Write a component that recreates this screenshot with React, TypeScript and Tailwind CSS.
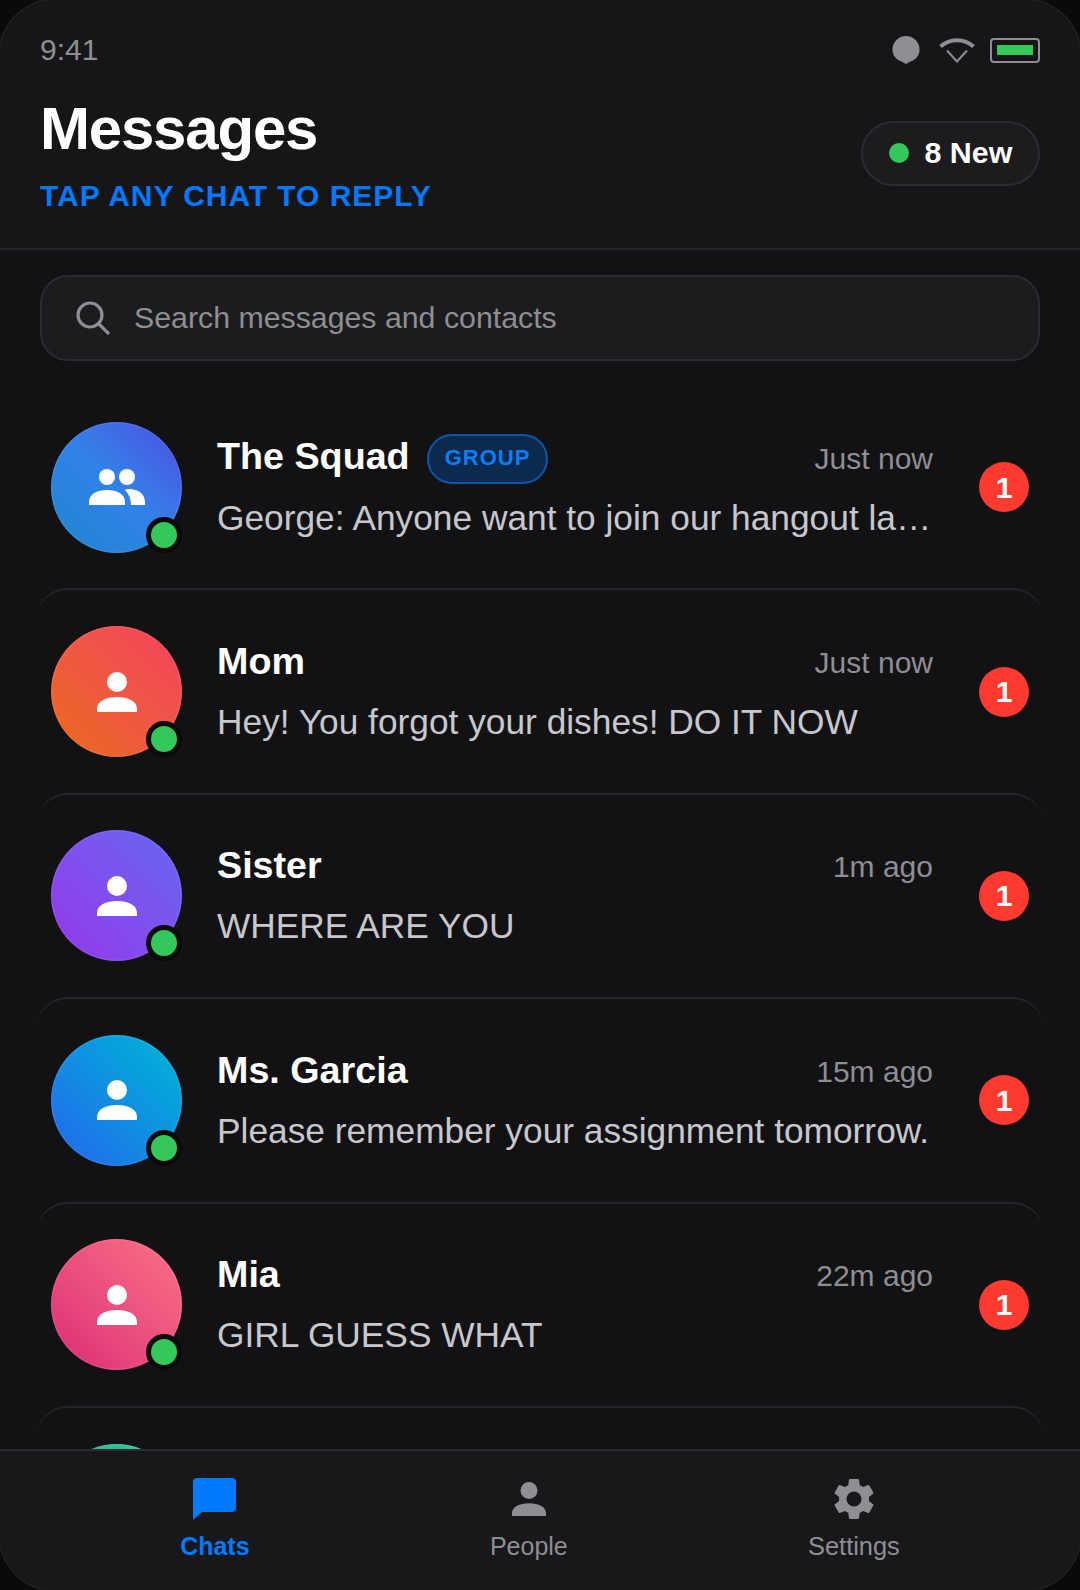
const font = { fontFamily: '"Liberation Sans", Arial, sans-serif' }

type Chat = {
  name: string
  time: string
  preview: string
  gradient: string
  group?: boolean
}

const chats: Chat[] = [
  { name: 'The Squad', time: 'Just now', preview: 'George: Anyone want to join our hangout later tonight at the park?', gradient: 'bg-gradient-to-tr from-[#1e85cc] via-[#3182e8] to-[#4a4ae0]', group: true },
  { name: 'Mom', time: 'Just now', preview: 'Hey! You forgot your dishes! DO IT NOW', gradient: 'bg-gradient-to-tr from-[#ea6a08] to-[#f43f5e]' },
  { name: 'Sister', time: '1m ago', preview: 'WHERE ARE YOU', gradient: 'bg-gradient-to-tr from-[#9333ea] to-[#6366f1]' },
  { name: 'Ms. Garcia', time: '15m ago', preview: 'Please remember your assignment tomorrow.', gradient: 'bg-gradient-to-tr from-[#2563eb] to-[#06b6d4]' },
  { name: 'Mia', time: '22m ago', preview: 'GIRL GUESS WHAT', gradient: 'bg-gradient-to-tr from-[#db2777] to-[#fb7185]' },
  { name: 'Alex', time: '40m ago', preview: 'See you soon', gradient: 'bg-gradient-to-tr from-[#0d9488] to-[#34d399]' },
]

function PersonIcon({ className }: { className?: string }) {
  return (
    <svg viewBox="0 0 40 40" className={className} fill="currentColor">
      <circle cx="20" cy="10" r="10" />
      <path d="M0 40v-3c0-8 9-12 20-12s20 4 20 12v3z" />
    </svg>
  )
}

function GroupIcon() {
  return (
    <svg viewBox="0 0 56 36" className="w-[56px] h-[36px]" fill="currentColor">
      <circle cx="18" cy="8" r="8" />
      <circle cx="38" cy="8" r="8" />
      <path d="M0 36v-3c0-8 8-12 18-12s18 4 18 12v3z" />
      <path d="M36 21c1-.6 3-1 4-1 9 0 16 5 16 13v3H42c0-6-2-11-6-15z" />
    </svg>
  )
}

function Row({ chat, first }: { chat: Chat; first: boolean }) {
  return (
    <div className={`flex items-center shrink-0 mx-[36px] pl-[15px] pr-[15px] rounded-[32px] h-[204.4px] border-t-2 ${first ? 'border-transparent' : 'border-[#26262a]'}`}>
      <div className="relative w-[131px] h-[131px] shrink-0">
        <div className={`w-full h-full rounded-full flex items-center justify-center text-white shadow-[inset_0_0_0_1.5px_rgba(255,255,255,0.08)] ${chat.gradient}`}>
          {chat.group ? <GroupIcon /> : <PersonIcon className="w-[40px] h-[40px]" />}
        </div>
        <div className="absolute right-0 bottom-0 w-[36px] h-[36px] rounded-full bg-[#34c759] border-[5px] border-[#0a0a0c]" />
      </div>
      <div className="flex-1 min-w-0 ml-[35px] mr-[46px] mb-[3px]">
        <div className="flex items-center justify-between h-[50px]">
          <div className="flex items-center gap-[17px] min-w-0">
            <span className="text-[37.7px] font-bold text-white">{chat.name}</span>
            {chat.group && (
              <span className="mt-[5px] h-[50px] px-[16px] pb-[3px] rounded-full bg-[#0c2a4d] border-2 border-[#0d55a8] text-[#0a7ff5] text-[22px] font-bold tracking-[1px] flex items-center">GROUP</span>
            )}
          </div>
          <span className="pt-[3px] text-[30px] text-[#8e8e93] shrink-0">{chat.time}</span>
        </div>
        <p className="mt-[14px] text-[35.3px] leading-[44px] text-[#c7c7cc] truncate">{chat.preview}</p>
      </div>
      <div className="w-[50px] h-[50px] shrink-0 rounded-full bg-[#ff3b30] text-white text-[30px] font-bold flex items-center justify-center">1</div>
    </div>
  )
}

export default function App() {
  return (
    <div style={font} className="w-[1080px] h-[1590px] bg-[#0a0a0b] overflow-hidden">
      <div className="w-full h-full rounded-[56px] overflow-hidden bg-[#121214] flex flex-col shadow-[0_0_0_2px_#1f1f22]">
        {/* header */}
        <div className="shrink-0 h-[250px] bg-[#161618] border-b-2 border-[#26262a] pl-[40px] pr-[40.5px] pt-[30px]">
          <div className="flex items-center justify-between h-[40px]">
            <span className="mb-[2px] text-[30px] text-[#8e8e93]">9:41</span>
            <div className="flex items-center gap-[15px]">
              <svg viewBox="0 0 28 28" className="mr-[4px] w-[28px] h-[28px] text-[#8e8e93]" fill="currentColor">
                <path d="M14 0a13.500 13.500 0 0 1 13.500 13.500c0 6-3.500 10-9 12L14 28l-4.500-2.500c-5.500-2-9-6-9-12A13.500 13.500 0 0 1 14 0z" />
              </svg>
              <svg viewBox="0 0 36 26" className="w-[36px] h-[26px] text-[#8e8e93]" fill="none" stroke="currentColor">
                <path d="M1.500 9.500C11 1 25 1 34.500 9.500" strokeWidth="4" />
                <path d="M8 13.500l10 11 10-11" strokeWidth="2" />
              </svg>
              <div className="w-[50px] h-[25px] rounded-[4px] border-2 border-[#8e8e93] flex items-center justify-center">
                <div className="w-[36px] h-[10px] bg-[#34c759]" />
              </div>
            </div>
          </div>
          <div className="flex items-center justify-between mt-[24px]">
            <div>
              <h1 className="text-[60px] leading-[70px] font-bold text-white tracking-[-1.2px]">Messages</h1>
              <p className="mt-[14px] text-[30px] leading-[36px] font-bold text-[#007aff] tracking-[0.95px]">TAP ANY CHAT TO REPLY</p>
            </div>
            <div className="mb-[2px] flex items-center h-[65px] w-[179px] pl-[26px] rounded-full bg-[#1c1c1f] border-2 border-[#2c2c30]">
              <span className="w-[20px] h-[20px] rounded-full bg-[#34c759]" />
              <span className="ml-[16px] text-[30.4px] font-bold text-white">8 New</span>
            </div>
          </div>
        </div>

        {/* list */}
        <div className="flex-1 min-h-0 overflow-hidden flex flex-col">
          <div className="shrink-0 mx-[40px] mt-[25px] mb-[23px] h-[86px] rounded-[28px] bg-[#1c1c1f] border-2 border-[#2c2c30] flex items-center pl-[34px]">
            <svg viewBox="0 0 34 34" className="w-[34px] h-[34px] text-[#8e8e93]" fill="none" stroke="currentColor" strokeWidth="3.200">
              <circle cx="14" cy="14" r="12" />
              <path d="M23 23l10 10" />
            </svg>
            <span className="ml-[24px] mb-[1px] text-[30.3px] text-[#8e8e93]">Search messages and contacts</span>
          </div>
          {chats.map((c, i) => (
            <Row key={c.name} chat={c} first={i === 0} />
          ))}
        </div>

        {/* bottom nav */}
        <div className="shrink-0 h-[141px] bg-[#18181b] border-t-2 border-[#2c2c30] flex justify-around px-[60px] pt-[23px]">
          <div className="flex flex-col items-center text-[#007aff]">
            <div className="h-[50px] flex items-center">
              <svg viewBox="0 0 43 42" className="w-[43px] h-[42px]" fill="currentColor">
                <path d="M4 0h35a4 4 0 0 1 4 4v26a4 4 0 0 1-4 4H9l-9 8V4a4 4 0 0 1 4-4z" />
              </svg>
            </div>
            <span className="mt-[7px] text-[25px] leading-[30px] font-bold">Chats</span>
          </div>
          <div className="flex flex-col items-center text-[#8e8e93]">
            <div className="h-[50px] flex items-center">
              <PersonIcon className="w-[34px] h-[34px]" />
            </div>
            <span className="mt-[7px] text-[25px] leading-[30px]">People</span>
          </div>
          <div className="flex flex-col items-center text-[#8e8e93]">
            <div className="h-[50px] flex items-center">
              <svg viewBox="0 0 24 24" className="w-[50px] h-[50px]" fill="currentColor">
                <path d="M19.140 12.940c.04-.3.060-.61.060-.94 0-.32-.02-.64-.07-.94l2.030-1.580a.49.490 0 0 0 .12-.61l-1.920-3.320a.49.490 0 0 0-.59-.22l-2.390.96c-.5-.38-1.030-.7-1.620-.94l-.36-2.540a.480.480 0 0 0-.48-.41h-3.840a.470.470 0 0 0-.47.410l-.36 2.540c-.59.240-1.130.57-1.620.94l-2.390-.96a.480.480 0 0 0-.59.220L2.740 8.870a.470.470 0 0 0 .12.610l2.030 1.580c-.05.300-.09.630-.09.940s.02.640.07.940l-2.030 1.580a.490.490 0 0 0-.12.610l1.920 3.320c.12.220.37.290.59.220l2.390-.96c.5.380 1.030.7 1.620.94l.36 2.540c.05.240.24.410.48.410h3.840c.24 0 .44-.17.47-.41l.36-2.540c.59-.24 1.130-.56 1.620-.94l2.390.96c.22.080.47 0 .59-.22l1.920-3.320a.470.470 0 0 0-.12-.61l-2.010-1.580zM12 15.600A3.600 3.600 0 1 1 12 8.400a3.600 3.600 0 0 1 0 7.200z" />
              </svg>
            </div>
            <span className="mt-[7px] text-[25.4px] leading-[30px]">Settings</span>
          </div>
        </div>
      </div>
    </div>
  )
}
